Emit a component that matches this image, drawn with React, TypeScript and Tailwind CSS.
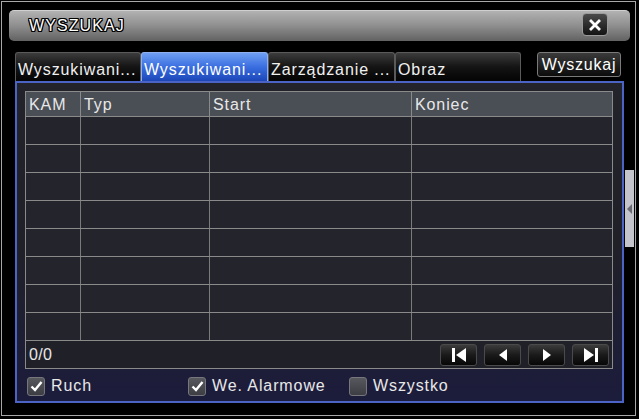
import React from 'react';

const FONT = "font-['Liberation_Sans',Arial,sans-serif]";

const TABS = [
  { label: 'Wyszukiwani...', w: 'w-[126px]', active: false },
  { label: 'Wyszukiwani...', w: 'w-[127px]', active: true },
  { label: 'Zarządzanie ...', w: 'w-[127px]', active: false },
  { label: 'Obraz', w: 'w-[126px]', active: false },
];

const COLS = [
  { label: 'KAM', w: 'w-[54px]' },
  { label: 'Typ', w: 'w-[129px]' },
  { label: 'Start', w: 'w-[202px]' },
  { label: 'Koniec', w: 'flex-1' },
];

function Check({ checked, label }: { checked: boolean; label: string }) {
  return (
    <div className="flex items-center gap-[6px]">
      <div className="w-[18px] h-[19px] rounded-[3px] border border-[#76767c] bg-gradient-to-b from-[#56585e] to-[#3c3e44] flex items-center justify-center">
        {checked && (
          <svg width="13" height="12" viewBox="0 0 13 12">
            <path d="M1.5 6.5 L5 10 L11.5 2" fill="none" stroke="#fff" strokeWidth="2.4" />
          </svg>
        )}
      </div>
      <span className="text-[16px] tracking-[0.9px] text-[#e8e8e8]">{label}</span>
    </div>
  );
}

function NavBtn({ kind }: { kind: 'first' | 'prev' | 'next' | 'last' }) {
  return (
    <div className="w-[37px] h-[22px] rounded-[3px] border border-[#4a4a4a] bg-gradient-to-b from-[#3c3c3c] via-[#1a1a1a] to-[#080808] flex items-center justify-center">
      <svg width="20" height="16" viewBox="0 0 20 16">
        {kind === 'first' && (
          <>
            <rect x="3" y="1" width="3" height="14" fill="#fff" />
            <path d="M17 1 L7 8 L17 15 Z" fill="#fff" />
          </>
        )}
        {kind === 'prev' && <path d="M14 2 L6 8 L14 14 Z" fill="#fff" />}
        {kind === 'next' && <path d="M6 2 L14 8 L6 14 Z" fill="#fff" />}
        {kind === 'last' && (
          <>
            <path d="M3 1 L13 8 L3 15 Z" fill="#fff" />
            <rect x="14" y="1" width="3" height="14" fill="#fff" />
          </>
        )}
      </svg>
    </div>
  );
}

export default function App() {
  return (
    <div className={`w-[639px] h-[419px] bg-black pt-px pl-px ${FONT}`}>
      <div className="relative w-[635px] h-[415px] border border-[#a8a8a8] bg-black">
        {/* Title bar */}
        <div className="ml-[7px] mt-[8px] w-[621px] h-[31px] rounded-[5px] border-t border-[#d0d0d0] bg-gradient-to-b from-[#b2b2b2] via-[#8e8e8e] to-[#626262] flex items-center justify-between pl-[20px] pr-[22px]">
          <span className="text-[16px] tracking-[1.1px] text-white [text-shadow:1px_0_0_#000,-1px_0_0_#000,0_1px_0_#000,0_-1px_0_#000,1px_1px_0_#000,-1px_-1px_0_#000,1px_-1px_0_#000,-1px_1px_0_#000]">
            WYSZUKAJ
          </span>
          <div className="w-[26px] h-[23px] -mt-[3px] rounded-[4px] border border-[#9a9a9a] bg-gradient-to-b from-[#4a4a4a] to-[#141414] flex items-center justify-center">
            <svg width="12" height="12" viewBox="0 0 12 12">
              <path d="M2 2 L10 10 M10 2 L2 10" stroke="#fff" strokeWidth="2.8" strokeLinecap="square" />
            </svg>
          </div>
        </div>

        {/* Tabs */}
        <div className="mt-[11px] ml-[13px] flex items-start">
          {TABS.map((t, i) => (
            <div
              key={i}
              className={`${t.w} h-[29px] rounded-t-[3px] border-t border-l border-r pl-[2px] pt-[5px] text-[16px] tracking-[0.9px] whitespace-nowrap overflow-hidden ${
                t.active
                  ? 'border-[#8fb0f0] bg-gradient-to-b from-[#6f9ef2] via-[#3a6ee0] to-[#1c46b8] text-white'
                  : 'border-[#5a5a5a] bg-gradient-to-b from-[#3c3c3c] via-[#141414] to-[#050505] text-[#f0f0f0]'
              }`}
            >
              {t.label}
            </div>
          ))}
          <div className="ml-[16px] w-[84px] h-[25px] rounded-[3px] border border-[#7a7a7a] bg-gradient-to-b from-[#3a3a3a] to-[#0c0c0c] text-[16px] tracking-[0.8px] text-white flex items-center justify-center">
            Wyszukaj
          </div>
        </div>

        {/* Content panel */}
        <div className="ml-[13px] w-[609px] h-[322px] border-2 border-[#4b63c4] bg-gradient-to-b from-[#23232b] via-[#202028] to-[#1c1c3c] pl-[8px] pt-[8px]">
          <div className="w-[588px] border border-[#8a8a8a] text-[16px] tracking-[0.9px] text-[#e8e8e8]">
            <div className="flex h-[24px] bg-[#4a4e55]">
              {COLS.map((c, i) => (
                <div key={i} className={`${c.w} ${i > 0 ? 'border-l border-[#8a8a8a]' : ''} pl-[3px] leading-[25px]`}>
                  {c.label}
                </div>
              ))}
            </div>
            {Array.from({ length: 8 }).map((_, r) => (
              <div key={r} className="flex h-[28px] border-t border-[#8a8a8a] bg-[#24242c]">
                {COLS.map((c, i) => (
                  <div key={i} className={`${c.w} ${i > 0 ? 'border-l border-[#7a7a7a]' : ''}`} />
                ))}
              </div>
            ))}
            <div className="flex h-[28px] border-t border-[#8a8a8a] items-center pl-[3px] pr-[3px] bg-[#202028]">
              <span className="flex-1 tracking-[0.3px]">0/0</span>
              <div className="flex gap-[7px]">
                <NavBtn kind="first" />
                <NavBtn kind="prev" />
                <NavBtn kind="next" />
                <NavBtn kind="last" />
              </div>
            </div>
          </div>

          <div className="flex mt-[5px] pl-[2px]">
            <div className="w-[161px]">
              <Check checked label="Ruch" />
            </div>
            <div className="w-[161px]">
              <Check checked label="We. Alarmowe" />
            </div>
            <Check checked={false} label="Wszystko" />
          </div>
        </div>

        {/* Side scroll handle */}
        <div className="absolute left-[623px] top-[168px] w-[9px] h-[77px] bg-[#c4c4cc] flex items-center justify-center">
          <svg width="6" height="10" viewBox="0 0 6 10">
            <path d="M5 0 L0 5 L5 10 Z" fill="#6a6a72" />
          </svg>
        </div>
      </div>
    </div>
  );
}
